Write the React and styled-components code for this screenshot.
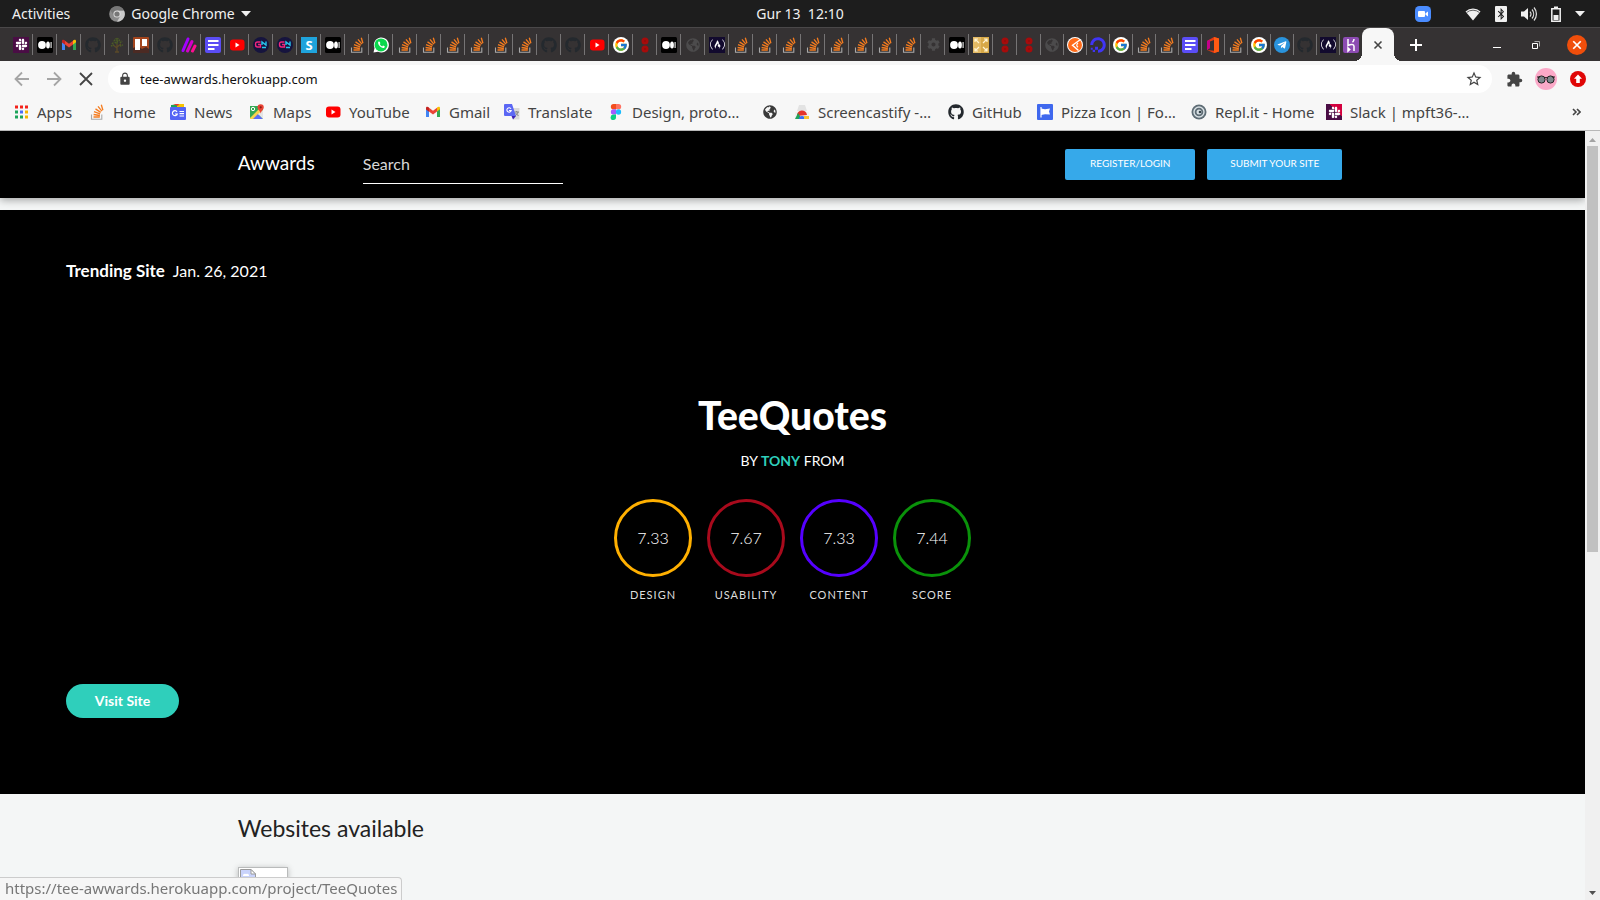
import React from "react";
import styled, { createGlobalStyle } from "styled-components";
import { FaGithub, FaSlack, FaFreeCodeCamp, FaDigitalOcean, FaCog, FaChrome, FaTelegramPlane, FaBluetoothB, FaGlobeAmericas } from "react-icons/fa";
import { FcGoogle } from "react-icons/fc";
import { MdExtension, MdStarBorder, MdLock } from "react-icons/md";

const GlobalStyle = createGlobalStyle`
  *, *::before, *::after { box-sizing: border-box; }
  body { margin: 0; overflow: hidden; }
  h1, h2, p, ul, dl, dd { margin: 0; padding: 0; }
  button, input { font: inherit; color: inherit; border: 0; padding: 0; background: none; }
  a { color: inherit; text-decoration: none; }
  svg { display: block; flex: none; }
`;

const uiFont = `"Noto Sans", "Open Sans", sans-serif`;
const siteFont = `Lato, "Open Sans", sans-serif`;

const Desktop = styled.div`
  display: flex;
  flex-direction: column;
  height: 100vh;
  font-family: ${uiFont};
  background: #f7f7f7;
`;

/* ---------- desktop top bar ---------- */

const TopBar = styled.header`
  display: grid;
  grid-template-columns: 1fr auto 1fr;
  align-items: center;
  flex: none;
  height: 27px;
  padding: 0 12px;
  background: #1d1d1d;
  color: #f0f0f0;
  font-size: 14px;
  line-height: 20px;
`;
const TopLeft = styled.div`
  display: flex;
  align-items: center;
  gap: 39px;
`;
const TopButton = styled.button`
  display: flex;
  align-items: center;
  gap: 6px;
`;
const Clock = styled.time`
  white-space: pre;
`;
const Tray = styled.div`
  display: flex;
  align-items: center;
  justify-content: flex-end;
  gap: 14px;
  padding-right: 3px;
`;
const TrayApp = styled.div`
  margin-right: 20px;
`;

/* ---------- tab strip ---------- */

const TabStrip = styled.nav`
  display: flex;
  align-items: stretch;
  flex: none;
  height: 34px;
  padding-left: 9px;
  border-top: 1px solid #4a4849;
  background: #353233;
`;
const Tab = styled.button`
  display: flex;
  align-items: center;
  flex: none;
  width: ${(p) => (p.$narrow ? 23 : 24)}px;
  height: 21px;
  margin-top: 6px;
  padding-left: ${(p) => (p.$narrow ? 3 : 4)}px;
  border-right: 1px solid #767475;
  &:nth-last-of-type(3) {
    width: 22px;
    border-right: 0;
  }
`;
const ActiveTab = styled.button`
  position: relative;
  display: flex;
  align-items: center;
  justify-content: center;
  flex: none;
  width: 32px;
  border-radius: 8px 8px 0 0;
  background: #f7f7f7;
  color: #444;
  &::before, &::after {
    content: "";
    position: absolute;
    bottom: 0;
    width: 8px;
    height: 8px;
  }
  &::before {
    right: 100%;
    background: radial-gradient(circle at 0 0, transparent 8px, #f7f7f7 8px);
  }
  &::after {
    left: 100%;
    background: radial-gradient(circle at 100% 0, transparent 8px, #f7f7f7 8px);
  }
`;
const NewTab = styled.button`
  display: flex;
  align-items: center;
  padding-left: 14px;
  color: #fff;
`;
const WindowControls = styled.div`
  display: flex;
  align-items: center;
  gap: 23px;
  margin-left: auto;
  padding-right: 13px;
  color: #fff;
`;

/* ---------- toolbar ---------- */

const Toolbar = styled.div`
  display: flex;
  align-items: center;
  flex: none;
  gap: 16px;
  height: 36px;
  padding: 0 14px;
  color: #444;
`;
const IconButton = styled.button`
  display: flex;
  align-items: center;
  justify-content: center;
  width: 16px;
  height: 24px;
  color: ${(p) => (p.$muted ? "#a5a5a5" : "#444")};
`;
const AddressBox = styled.label`
  display: flex;
  align-items: center;
  flex: 1;
  gap: 8px;
  height: 28px;
  margin-right: -2px;
  margin-left: -2px;
  padding: 0 10px;
  border-radius: 14px;
  background: #fff;
`;
const AddressInput = styled.input`
  flex: 1;
  min-width: 0;
  outline: 0;
  color: #111;
  font-size: 13px;
  line-height: 20px;
`;
const BookmarkBar = styled.nav`
  display: flex;
  align-items: center;
  flex: none;
  height: 34px;
  padding: 0 19px 3px 13px;
  border-bottom: 1px solid #b8b8b8;
  color: #444;
  font-size: 15px;
  line-height: 20px;
`;
const Bookmark = styled.a`
  display: flex;
  align-items: center;
  flex: none;
  gap: 8px;
  width: ${(p) => p.$width}px;
  white-space: nowrap;
`;
const MoreBookmarks = styled.button`
  margin-left: auto;
  display: flex;
`;

/* ---------- page ---------- */

const Viewport = styled.div`
  display: flex;
  flex: 1;
  min-height: 0;
  overflow: hidden;
`;
const Page = styled.div`
  flex: 1;
  min-width: 0;
  overflow: hidden;
  background: #f4f6f6;
  font-family: ${siteFont};
`;
const SiteHeader = styled.header`
  margin-bottom: 12px;
  background: #000;
  color: #fff;
  box-shadow: 0 2px 8px rgba(0, 0, 0, 0.35);
`;
const Container = styled.div`
  width: 70%;
  margin: 0 auto;
`;
const HeaderRow = styled(Container)`
  display: flex;
  align-items: center;
  height: 67px;
  padding-right: 5px;
`;
const Brand = styled.a`
  width: 125px;
  padding-bottom: 3px;
  font-size: 19px;
  line-height: 24px;
`;
const SearchInput = styled.input`
  width: 200px;
  height: 38px;
  padding-bottom: 2px;
  border-bottom: 1px solid #fff;
  outline: 0;
  font-size: 16px;
  &::placeholder { color: #d8d8d8; opacity: 1; }
`;
const HeaderActions = styled.div`
  display: flex;
  gap: 12px;
  margin-left: auto;
`;
const HeaderButton = styled.button`
  width: ${(p) => p.$width}px;
  height: 31px;
  padding-bottom: 4px;
  border-radius: 2px;
  background: #36a9ea;
  color: #fff;
  font-size: 10px;
`;
const Hero = styled.section`
  padding: 49px 66px 76px;
  background: #000;
  color: #fff;
`;
const Trending = styled.p`
  display: flex;
  gap: 8px;
  margin-bottom: 108px;
  font-size: 17px;
  line-height: 24px;
`;
const TrendingDate = styled.time`
  font-size: 16px;
`;
const HeroTitle = styled.h1`
  font-family: "Lato Black", ${siteFont};
  font-size: 39px;
  font-weight: 900;
  line-height: 48px;
  text-align: center;
`;
const Byline = styled.p`
  margin: 12px 0 28px;
  font-size: 14px;
  line-height: 20px;
  text-align: center;
`;
const Author = styled.a`
  color: #2fcfbb;
  font-weight: 700;
`;
const Scores = styled.dl`
  display: flex;
  justify-content: center;
  gap: 15px;
  margin-bottom: 79px;
`;
const Score = styled.div`
  display: flex;
  flex-direction: column-reverse;
  align-items: center;
  gap: 8px;
  width: 78px;
`;
const Ring = styled.dd`
  display: flex;
  align-items: center;
  justify-content: center;
  width: 78px;
  height: 78px;
  padding-bottom: 2px;
  border: 3px solid ${(p) => p.$color};
  border-radius: 50%;
  font-size: 16px;
  font-weight: 300;
`;
const ScoreLabel = styled.dt`
  font-size: 11px;
  line-height: 20px;
  letter-spacing: 1px;
  color: #ddd;
`;
const VisitButton = styled.button`
  width: 113px;
  height: 34px;
  padding-bottom: 2px;
  border-radius: 17px;
  background: #2fcfbb;
  color: #fff;
  font-size: 14px;
  font-weight: 700;
`;
const SectionTitle = styled.h2`
  padding: 18px 0 23px;
  color: #222;
  font-size: 23px;
  font-weight: 400;
  line-height: 32px;
`;
const Thumb = styled.div`
  width: 50px;
  height: 50px;
  padding: 1px;
  border: 1px solid #b9bbbb;
  background: #fff;
  box-shadow: 0 1px 6px rgba(0, 0, 0, 0.25);
`;
const Scrollbar = styled.div`
  display: flex;
  flex-direction: column;
  align-items: center;
  flex: none;
  width: 15px;
  padding: 7px 0 5px;
  background: #f0f0f0;
`;
const ScrollTrack = styled.div`
  flex: 1;
  width: 11px;
  margin: 4px 0 6px;
`;
const ScrollThumb = styled.div`
  height: 55%;
  background: #c1c1c1;
`;
const StatusBubble = styled.div`
  position: fixed;
  bottom: 0;
  left: 0;
  height: 23px;
  padding: 0 4px 0 5px;
  border: 1px solid #ccc;
  border-width: 1px 1px 0 0;
  border-radius: 0 4px 0 0;
  background: #f6f6f6;
  color: #777;
  font-size: 15px;
  line-height: 21px;
`;

/* ---------- icons ---------- */

const Svg = ({ size = 16, children }) => (
  <svg width={size} height={size} viewBox="0 0 16 16" fill="none" aria-hidden="true">{children}</svg>
);
const SquareIcon = styled.span`
  display: flex;
  align-items: center;
  justify-content: center;
  flex: none;
  width: 16px;
  height: 16px;
  border-radius: ${(p) => p.$radius || 0}px;
  background: ${(p) => p.$bg};
  color: ${(p) => p.$fg || "#fff"};
  font-size: 13px;
  font-weight: 700;
  line-height: 16px;
`;

const StackIcon = () => (
  <Svg>
    <path d="M2.5 10.5v4.8h10.3v-4.8" stroke="#a9a9a9" strokeWidth="1.1" />
    <path d="M4.5 13h6.3M4.6 10.5l6.3 1M5 7.7l6.1 2.2M6.5 4.9l5.2 3.5M9 2.4l3.9 4.7M12.3.8l1.6 5.4" stroke="#f57c1f" strokeWidth="1.3" />
  </Svg>
);
const MediumIcon = () => (
  <Svg>
    <rect width="16" height="16" rx="1.5" fill="#000" />
    <circle cx="5" cy="8" r="3.9" fill="#fff" />
    <ellipse cx="11" cy="8" rx="1.9" ry="3.6" fill="#fff" />
    <rect x="13.5" y="5" width="1.2" height="6" fill="#ddd" />
  </Svg>
);
const GmailIcon = () => (
  <Svg>
    <path d="M1 4v9h3V6z" fill="#4285f4" />
    <path d="M12 6v7h3V4z" fill="#34a853" />
    <path d="M12 3.5V7.5l3-2.2V4c0-1.5-1.7-1.9-3-.5z" fill="#fbbc04" />
    <path d="M4 3.7v3.8L8 10.5l4-3V3.7L8 6.8z" fill="#ea4335" />
    <path d="M1 4v1.5l3 2.2V3.6C2.8 2.2 1 2.5 1 4z" fill="#c5221f" />
  </Svg>
);
const YoutubeIcon = () => (
  <Svg>
    <rect x="1" y="2.5" width="14.5" height="11" rx="3" fill="#f00" />
    <path d="M6.5 5.5v5l4-2.5z" fill="#fff" />
  </Svg>
);
const TreeIcon = () => (
  <Svg>
    <path d="M8 15V7M8 11L4 8M8 10l4-3M6 15h4" stroke="#5b4a28" strokeWidth="1.3" />
    <path d="M3 7l2-2M5 4l3-3 3 3M8 3v4M11 6l2-2M2 9l3-1M11 9l3-1M6 6l3-2" stroke="#4b5c26" strokeWidth="1.6" strokeDasharray="1.5 .8" />
  </Svg>
);
const TrelloIcon = () => (
  <Svg>
    <rect width="16" height="16" rx="1" fill="#a4451d" />
    <path d="M0 11l5-2 4 3 4-2 3 2v4H0z" fill="#4c2a23" />
    <rect x="2" y="2" width="5" height="11" fill="#fff" /><rect x="9" y="2" width="5" height="7" fill="#fff" />
  </Svg>
);
const StripesIcon = () => (
  <Svg>
    <g strokeLinecap="round" strokeWidth="3">
      <path d="M2 13.5L7 2" stroke="#a400ff" /><path d="M6.500 14L11 4.500" stroke="#d400c8" /><path d="M11.500 14l2.500-5" stroke="#ff0d93" />
    </g>
  </Svg>
);
const FormIcon = () => (
  <Svg>
    <rect width="16" height="16" rx="2" fill="#5b4df5" />
    <path d="M3 4h10.500M3 8h10.500M3 12h6.500" stroke="#fff" strokeWidth="1.800" />
  </Svg>
);
const BadgeIcon = () => (
  <Svg>
    <circle cx="8" cy="8" r="8" fill="#16143e" />
    <path d="M7.500 5H4.500Q2.500 5 2.500 7.500T4.500 10h3V7.500H5" stroke="#f2257c" strokeWidth="1.400" />
    <path d="M9 8V5l4 3V4.500M9 10.500h4" stroke="#27c7ef" strokeWidth="1.400" />
  </Svg>
);
const WhatsappIcon = () => (
  <Svg>
    <path d="M.5 15.500l1-4.500A7.500 7.500 0 1 1 5 14.700z" fill="#fff" />
    <circle cx="8" cy="7.900" r="6.500" fill="#0bd84d" />
    <path d="M5.500 4.500c-1.800 2 2.500 7 5.300 6.500 1.200-.4 1.200-1.800.4-2l-1.200-.4-.8.800C8.200 9 7.200 8 6.800 7l.6-.8-.6-1.500z" fill="#fff" />
  </Svg>
);
const RedDots = () => (
  <Svg>
    <circle cx="8" cy="4" r="3.500" fill="#a60b0b" /><circle cx="8" cy="12" r="3.500" fill="#a60b0b" />
    <path d="M7 4h2M7 12h2" stroke="#8b0909" />
  </Svg>
);
const ExpandIcon = () => (
  <Svg>
    <path d="M0 0h16v16H0z" fill="#d7a847" /><path d="M0 0h8v16H0z" fill="#e3b964" />
    <path d="M6 6L2.500 2.500M2 5V2h3M10 6l3.500-3.500M11 2h3v3M6 10l-3.500 3.500M2 11v3h3M10 10l3.500 3.500M11 14h3v-3" stroke="#fff3d2" strokeWidth="1.200" />
  </Svg>
);
const OrangeIcon = () => (
  <Svg>
    <circle cx="8" cy="8" r="8" fill="#fff" />
    <circle cx="8" cy="8" r="7" fill="#ff6c1a" />
    <path d="M13.500 2.500L5.500 8.200l6 5.300" stroke="#fff" strokeWidth="1.400" />
    <path d="M11 5.800q-2.500 2.500 0 4.500" stroke="#fff" strokeWidth="1.200" />
  </Svg>
);
const OfficeIcon = () => (
  <Svg>
    <path d="M2 4l7-4 5 1.500v13L9 16l-7-3 7 .8V3L5 4.500V11l-3 2z" fill="#e33a12" /><path d="M9 0l5 1.500v13L9 16z" fill="#ff5a13" /><path d="M2 4l3-1.500V11l-3 2z" fill="#c4008a" />
  </Svg>
);
const HerokuIcon = () => (
  <Svg>
    <rect width="16" height="16" rx="2" fill="#8c4bb2" />
    <path d="M5 2v6.500c3-1.500 6-1.500 6 .8V14M11 2c0 1.500-.6 2.500-1.500 3.300M5 11v3l1.700-1.500z" stroke="#fff" strokeWidth="1.500" />
  </Svg>
);
const DarkGithub = () => <FaGithub size={16} color="#24292e" />;
const GoogleIcon = () => <SquareIcon $bg="#fff" $radius={8}><FcGoogle size={14} /></SquareIcon>;
const CampIcon = () => <SquareIcon $bg="#120a2e"><FaFreeCodeCamp size={15} /></SquareIcon>;
const SkypeIcon = () => <SquareIcon $bg="#1fa3dc">S</SquareIcon>;
const SlackIcon = () => <SquareIcon $bg="#4a0d45"><FaSlack size={13} /></SquareIcon>;
const SlackBookmarkIcon = () => (
  <SquareIcon $bg="linear-gradient(45deg, #4a0d45 60%, #d3003e 60%)"><FaSlack size={13} /></SquareIcon>
);
const DarkGlobe = () => <SquareIcon $bg="none" $fg="#4c4b4c"><FaGlobeAmericas size={14} /></SquareIcon>;
const GearIcon = () => <SquareIcon $bg="none" $fg="#4c4b4c"><FaCog size={13} /></SquareIcon>;
const OceanIcon = () => <FaDigitalOcean size={16} color="#4035f5" />;
const TelegramIcon = () => <SquareIcon $bg="#2a93dc" $radius={8}><FaTelegramPlane size={10} /></SquareIcon>;

const AppsIcon = () => (
  <Svg>
    <path d="M2 3h3M7 3h3M12 3h3" stroke="#f3221b" strokeWidth="3" />
    <path d="M2 8h3M2 13h3M7 13h3" stroke="#1da45a" strokeWidth="3" />
    <path d="M7 8h3" stroke="#4a6cf7" strokeWidth="3" />
    <path d="M12 8h3M12 13h3" stroke="#f5b400" strokeWidth="3" />
  </Svg>
);
const NewsIcon = () => (
  <Svg>
    <path d="M1 1l12-1v4H1z" fill="#1da45a" /><path d="M7 0h7v4H7z" fill="#f7c400" /><path d="M3 0h6l-1 2z" fill="#ef3b2c" />
    <rect y="3" width="16" height="13" rx="1" fill="#5464f5" />
    <path d="M7 7.800A2.500 2.500 0 1 0 7.300 10H5M9.500 7.500H14M9.500 9.700H14M9.500 12H14" stroke="#fff" strokeWidth="1.200" />
  </Svg>
);
const MapsIcon = () => (
  <Svg>
    <path d="M1 2h13v13H1z" fill="#35a853" /><path d="M1 14L11 4l3 3-8 8H1z" fill="#f8d34c" /><path d="M4 15l5-5 5 5z" fill="#5b6df5" /><path d="M9 10l5-4v9z" fill="#e5e5e5" />
    <circle cx="4" cy="5" r="1.700" stroke="#fff" />
    <path d="M8.500 3.500a3 3 0 0 1 6.300 0c0 2-2.800 3.500-3.100 6-.3-2.500-3.200-4-3.200-6z" fill="#ea4335" /><circle cx="11.700" cy="3.300" r="1.100" fill="#8b1a12" />
  </Svg>
);
const TranslateIcon = () => (
  <Svg>
    <path d="M7 4h8.500v11.500H9z" fill="#d9d9d9" /><path d="M10.500 8h4.500M12.700 7v1M14 8c-.5 2-1.500 3-3 4M11.500 9l3 3" stroke="#7b7b7b" strokeWidth=".9" />
    <path d="M1 0h7l4 12H1q-1 0-1-1V1q0-1 1-1z" fill="#5b67f4" /><path d="M7.500 12H12l-3 3.500z" fill="#3a20b5" />
    <path d="M7 4.800A2.200 2.200 0 1 0 7.200 6.500H5" stroke="#fff" strokeWidth="1.100" />
  </Svg>
);
const FigmaIcon = () => (
  <Svg>
    <path d="M8 0H5.500a2.600 2.600 0 0 0 0 5.300H8z" fill="#f24e1e" /><path d="M8 0h2.500a2.600 2.600 0 0 1 0 5.300H8z" fill="#ff7262" />
    <path d="M8 5.300H5.500a2.600 2.600 0 0 0 0 5.300H8z" fill="#a259ff" /><circle cx="10.500" cy="8" r="2.650" fill="#1abcfe" />
    <path d="M8 10.600H5.500A2.700 2.700 0 1 0 8 13.300z" fill="#0acf83" />
  </Svg>
);
const GlobeIcon = () => <SquareIcon $bg="none" $fg="#3a3a3a"><FaGlobeAmericas size={14} /></SquareIcon>;
const CastIcon = () => (
  <Svg>
    <path d="M3 7l2-6h6l2 6z" fill="#e3e3e3" /><path d="M1 15V8h14v7z" fill="#f1f1f1" />
    <path d="M3 12a5 5 0 0 1 10-1z" fill="#e5342b" /><path d="M1 15l3-6 2.500 4v2z" fill="#21a55b" /><path d="M5 15a3 3 0 0 1 6 0z" fill="#3a6ef0" /><path d="M10 12h5v3h-5z" fill="#f7c52e" />
  </Svg>
);
const FlagIcon = () => (
  <Svg><rect width="16" height="16" rx="1" fill="#3f68ee" /><path d="M4 3v10.500" stroke="#fff" strokeWidth="1.200" /><path d="M4 4.500l4 .8 5-.8-1 3 1 3-5-.3-4 .8z" fill="#fff" /></Svg>
);
const ReplIcon = () => (
  <Svg><circle cx="8" cy="8" r="7.500" fill="#5e6c75" /><circle cx="8" cy="8" r="5" stroke="#d8e0e4" strokeWidth="1.400" /><circle cx="8" cy="8" r="2.500" fill="#d8e0e4" /><circle cx="9" cy="8" r="1.300" fill="#35434a" /></Svg>
);

const tabs = [
  SlackIcon, MediumIcon, GmailIcon, DarkGithub, TreeIcon, TrelloIcon, DarkGithub, StripesIcon, FormIcon, YoutubeIcon,
  BadgeIcon, BadgeIcon, SkypeIcon, MediumIcon, StackIcon, WhatsappIcon, StackIcon, StackIcon, StackIcon, StackIcon,
  StackIcon, StackIcon, DarkGithub, DarkGithub, YoutubeIcon, GoogleIcon, RedDots, MediumIcon, DarkGlobe, CampIcon,
  StackIcon, StackIcon, StackIcon, StackIcon, StackIcon, StackIcon, StackIcon, StackIcon, GearIcon, MediumIcon,
  ExpandIcon, RedDots, RedDots, DarkGlobe, OrangeIcon, OceanIcon, GoogleIcon, StackIcon, StackIcon, FormIcon,
  OfficeIcon, StackIcon, GoogleIcon, TelegramIcon, DarkGithub, CampIcon, HerokuIcon,
];
const FIRST_NARROW_TAB = 43;

const bookmarks = [
  { label: "Apps", Icon: AppsIcon, width: 76 },
  { label: "Home", Icon: StackIcon, width: 81 },
  { label: "News", Icon: NewsIcon, width: 79 },
  { label: "Maps", Icon: MapsIcon, width: 76 },
  { label: "YouTube", Icon: YoutubeIcon, width: 100 },
  { label: "Gmail", Icon: GmailIcon, width: 79 },
  { label: "Translate", Icon: TranslateIcon, width: 104 },
  { label: "Design, proto…", Icon: FigmaIcon, width: 154 },
  { label: "", Icon: GlobeIcon, width: 32 },
  { label: "Screencastify -…", Icon: CastIcon, width: 154 },
  { label: "GitHub", Icon: DarkGithub, width: 89 },
  { label: "Pizza Icon | Fo…", Icon: FlagIcon, width: 154 },
  { label: "Repl.it - Home", Icon: ReplIcon, width: 135 },
  { label: "Slack | mpft36-…", Icon: SlackBookmarkIcon, width: 160 },
];

const scores = [
  { label: "DESIGN", value: "7.33", color: "#ffb000" },
  { label: "USABILITY", value: "7.67", color: "#a80a1c" },
  { label: "CONTENT", value: "7.33", color: "#5500ff" },
  { label: "SCORE", value: "7.44", color: "#0a920a" },
];

const Caret = () => (
  <svg width="10" height="6" viewBox="0 0 10 6" aria-hidden="true"><path d="M0 0h10L5 5.500z" fill="#f0f0f0" /></svg>
);

const ChromeIcon = () => (
  <Svg>
    <circle cx="8" cy="8" r="7.800" fill="#8c8c8c" />
    <path d="M8 4.500h7a7.800 7.800 0 0 1-7 11.300l3.300-5.800z" fill="#c9c9c9" />
    <path d="M1.200 4.300A7.800 7.800 0 0 1 15 4.500H8L5 9.800z" fill="#777" />
    <circle cx="8" cy="8" r="3.600" fill="#ddd" /><circle cx="8" cy="8" r="2.600" fill="#777" />
  </Svg>
);

export default function App() {
  return (
    <Desktop>
      <GlobalStyle />
      <TopBar>
        <TopLeft>
          <TopButton>Activities</TopButton>
          <TopButton><ChromeIcon />Google Chrome<Caret /></TopButton>
        </TopLeft>
        <Clock>{"Gur 13  12:10"}</Clock>
        <Tray>
          <TrayApp>
            <Svg><rect width="16" height="16" rx="4.500" fill="#4a8cff" /><rect x="3" y="5" width="7" height="6" rx="1" fill="#fff" /><path d="M10.500 7.200L13 5.500v5l-2.500-1.700z" fill="#fff" /></Svg>
          </TrayApp>
          <Svg><path d="M8 14.500L.5 5.500a11 11 0 0 1 15 0z" fill="#f0f0f0" /><path d="M1.500 6.600a10 10 0 0 1 13 0" stroke="#555" strokeWidth=".9" /></Svg>
          <svg width="12" height="16" viewBox="0 0 12 16" aria-hidden="true"><rect width="12" height="16" rx="1" fill="#f0f0f0" /><g transform="translate(0 2)"><FaBluetoothB size={12} color="#1d1d1d" /></g></svg>
          <Svg><path d="M0 5.500h3L7 2v12L3 10.500H0z" fill="#f0f0f0" /><path d="M9 5.500a4 4 0 0 1 0 5M11 3.500a7 7 0 0 1 0 9M13 1.500a10 10 0 0 1 0 13" stroke="#ddd" strokeWidth="1.200" /></Svg>
          <svg width="10" height="16" viewBox="0 0 10 16" aria-hidden="true"><path d="M.8 2.800h8.400v12.400H.8z" fill="none" stroke="#f0f0f0" strokeWidth="1.500" /><path d="M3 .5h4v2H3zM2.500 9h5v5h-5z" fill="#f0f0f0" /></svg>
          <Caret />
        </Tray>
      </TopBar>

      <TabStrip aria-label="Tabs">
        {tabs.map((Icon, i) => (
          <Tab key={i} $narrow={i >= FIRST_NARROW_TAB} aria-label={`Tab ${i + 1}`}><Icon /></Tab>
        ))}
        <ActiveTab aria-label="Close tab">
          <Svg><path d="M4.500 4.500l7 7M11.500 4.500l-7 7" stroke="currentColor" strokeWidth="1.600" /></Svg>
        </ActiveTab>
        <NewTab aria-label="New tab">
          <Svg><path d="M8 2v12M2 8h12" stroke="currentColor" strokeWidth="2" /></Svg>
        </NewTab>
        <WindowControls>
          <button aria-label="Minimize"><Svg><path d="M4 10.500h8" stroke="currentColor" /></Svg></button>
          <button aria-label="Restore"><Svg><path d="M4.500 6.500h5v5h-5z" stroke="currentColor" /><path d="M6.500 4.500h5v5" stroke="#aaa" /></Svg></button>
          <button aria-label="Close window">
            <Svg size={20}><circle cx="8" cy="8" r="8" fill="#f04e0b" /><path d="M5 5l6 6M11 5l-6 6" stroke="#fff" strokeWidth="1.400" /></Svg>
          </button>
        </WindowControls>
      </TabStrip>

      <Toolbar>
        <IconButton $muted aria-label="Back"><Svg><path d="M15 8H2M8 1.500L1.500 8 8 14.500" stroke="currentColor" strokeWidth="1.800" /></Svg></IconButton>
        <IconButton $muted aria-label="Forward"><Svg><path d="M1 8h13M8 1.500L14.500 8 8 14.500" stroke="currentColor" strokeWidth="1.800" /></Svg></IconButton>
        <IconButton aria-label="Stop loading"><Svg><path d="M2 2l12 12M14 2L2 14" stroke="currentColor" strokeWidth="1.800" /></Svg></IconButton>
        <AddressBox>
          <MdLock size={14} color="#444" />
          <AddressInput aria-label="Address" defaultValue="tee-awwards.herokuapp.com" />
          <IconButton aria-label="Bookmark this page"><MdStarBorder size={18} /></IconButton>
        </AddressBox>
        <IconButton aria-label="Extensions"><MdExtension size={17} /></IconButton>
        <IconButton aria-label="Profile">
          <svg width="22" height="22" viewBox="0 0 22 22"><circle cx="11" cy="11" r="11" fill="#fba9c8" /><circle cx="6.500" cy="11.500" r="3.600" fill="#7d868c" stroke="#222" /><circle cx="15.500" cy="11.500" r="3.600" fill="#7d868c" stroke="#222" /><path d="M2 9h3M9 10q2-1 4 0M17 9h3" stroke="#222" fill="none" /></svg>
        </IconButton>
        <IconButton aria-label="Update">
          <Svg><circle cx="8" cy="8" r="8" fill="#e00606" /><path d="M8 3.500l4 4.200H9.800V12H6.200V7.700H4z" fill="#fff" /></Svg>
        </IconButton>
      </Toolbar>

      <BookmarkBar aria-label="Bookmarks">
        {bookmarks.map(({ label, Icon, width }) => (
          <Bookmark key={label} href="#" $width={width} aria-label={label || "Bookmark"}><Icon />{label}</Bookmark>
        ))}
        <MoreBookmarks aria-label="More bookmarks">
          <svg width="9" height="8" viewBox="0 0 9 8" fill="none"><path d="M1 1l3 3-3 3M5 1l3 3-3 3" stroke="#444" strokeWidth="1.600" /></svg>
        </MoreBookmarks>
      </BookmarkBar>

      <Viewport>
        <Page>
          <SiteHeader>
            <HeaderRow>
              <Brand href="#">Awwards</Brand>
              <SearchInput type="search" placeholder="Search" aria-label="Search" />
              <HeaderActions>
                <HeaderButton $width={130}>REGISTER/LOGIN</HeaderButton>
                <HeaderButton $width={135}>SUBMIT YOUR SITE</HeaderButton>
              </HeaderActions>
            </HeaderRow>
          </SiteHeader>
          <Hero>
            <Trending><strong>Trending Site</strong><TrendingDate>Jan. 26, 2021</TrendingDate></Trending>
            <HeroTitle>TeeQuotes</HeroTitle>
            <Byline>BY <Author href="#">TONY</Author> FROM</Byline>
            <Scores>
              {scores.map(({ label, value, color }) => (
                <Score key={label}>
                  <ScoreLabel>{label}</ScoreLabel>
                  <Ring $color={color}>{value}</Ring>
                </Score>
              ))}
            </Scores>
            <VisitButton>Visit Site</VisitButton>
          </Hero>
          <Container as="section">
            <SectionTitle>Websites available</SectionTitle>
            <Thumb>
              <Svg><path d="M.5.5H11L15.500 5v10.500H.5z" fill="#c9d3fb" stroke="#9a9a9a" /><path d="M11 .5V5h4.500z" fill="#fff" stroke="#9a9a9a" /><path d="M3 7a2 2 0 0 1 3-2 2 2 0 0 1 3 2z" fill="#fff" /></Svg>
            </Thumb>
          </Container>
        </Page>
        <Scrollbar aria-hidden="true">
          <svg width="7" height="4" viewBox="0 0 7 4"><path d="M0 4h7L3.500 0z" fill="#a3a3a3" /></svg>
          <ScrollTrack><ScrollThumb /></ScrollTrack>
          <svg width="7" height="4" viewBox="0 0 7 4"><path d="M0 0h7L3.500 4z" fill="#505050" /></svg>
        </Scrollbar>
      </Viewport>
      <StatusBubble>https://tee-awwards.herokuapp.com/project/TeeQuotes</StatusBubble>
    </Desktop>
  );
}
